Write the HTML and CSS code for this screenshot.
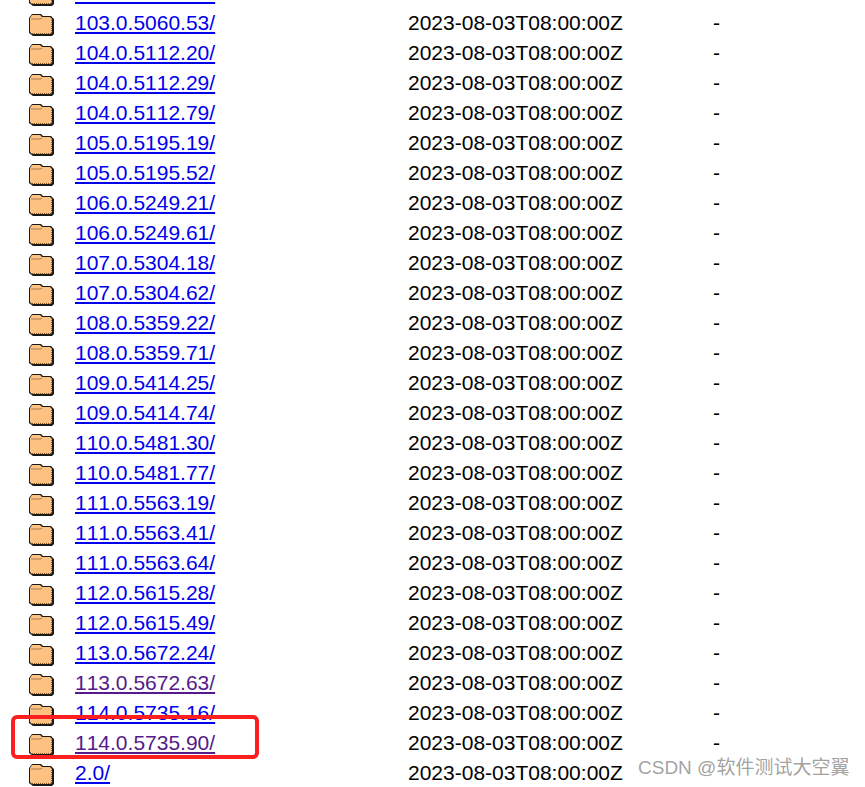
FILE: index.html
```html
<!DOCTYPE html>
<html lang="en">

<head>
	<meta charset="UTF-8">
	<title>Index of /</title>
	<link rel="stylesheet" href="styles.css">
</head>

<body>
	<svg class="defs" width="0" height="0">
		<symbol id="folder" viewBox="0 0 25 23">
			<path d="M0 5L3 1H12L14 3H22L25 6V21L23 23H4L0 20Z" fill="#1a1a1a" />
			<path d="M1 5L3 2H11L13 4H21L23 6V19L22 21H3L1 19Z" fill="#fdc282" />
			<path d="M2 6H12L13 5" stroke="#a87c4c" fill="none" />
			<path d="M3 20.500H22M22.500 7V20" stroke="#8a5a20" stroke-dasharray="1 1" fill="none" />
		</symbol>
	</svg>
	<div class="listing">
		<div class="row"><svg class="icon"><use href="#folder" /></svg><a href="#">103.0.5060.24/</a><span>2023-08-03T08:00:00Z</span><span>-</span></div>
		<div class="row"><svg class="icon"><use href="#folder" /></svg><a href="#">103.0.5060.53/</a><span>2023-08-03T08:00:00Z</span><span>-</span></div>
		<div class="row"><svg class="icon"><use href="#folder" /></svg><a href="#">104.0.5112.20/</a><span>2023-08-03T08:00:00Z</span><span>-</span></div>
		<div class="row"><svg class="icon"><use href="#folder" /></svg><a href="#">104.0.5112.29/</a><span>2023-08-03T08:00:00Z</span><span>-</span></div>
		<div class="row"><svg class="icon"><use href="#folder" /></svg><a href="#">104.0.5112.79/</a><span>2023-08-03T08:00:00Z</span><span>-</span></div>
		<div class="row"><svg class="icon"><use href="#folder" /></svg><a href="#">105.0.5195.19/</a><span>2023-08-03T08:00:00Z</span><span>-</span></div>
		<div class="row"><svg class="icon"><use href="#folder" /></svg><a href="#">105.0.5195.52/</a><span>2023-08-03T08:00:00Z</span><span>-</span></div>
		<div class="row"><svg class="icon"><use href="#folder" /></svg><a href="#">106.0.5249.21/</a><span>2023-08-03T08:00:00Z</span><span>-</span></div>
		<div class="row"><svg class="icon"><use href="#folder" /></svg><a href="#">106.0.5249.61/</a><span>2023-08-03T08:00:00Z</span><span>-</span></div>
		<div class="row"><svg class="icon"><use href="#folder" /></svg><a href="#">107.0.5304.18/</a><span>2023-08-03T08:00:00Z</span><span>-</span></div>
		<div class="row"><svg class="icon"><use href="#folder" /></svg><a href="#">107.0.5304.62/</a><span>2023-08-03T08:00:00Z</span><span>-</span></div>
		<div class="row"><svg class="icon"><use href="#folder" /></svg><a href="#">108.0.5359.22/</a><span>2023-08-03T08:00:00Z</span><span>-</span></div>
		<div class="row"><svg class="icon"><use href="#folder" /></svg><a href="#">108.0.5359.71/</a><span>2023-08-03T08:00:00Z</span><span>-</span></div>
		<div class="row"><svg class="icon"><use href="#folder" /></svg><a href="#">109.0.5414.25/</a><span>2023-08-03T08:00:00Z</span><span>-</span></div>
		<div class="row"><svg class="icon"><use href="#folder" /></svg><a href="#">109.0.5414.74/</a><span>2023-08-03T08:00:00Z</span><span>-</span></div>
		<div class="row"><svg class="icon"><use href="#folder" /></svg><a href="#">110.0.5481.30/</a><span>2023-08-03T08:00:00Z</span><span>-</span></div>
		<div class="row"><svg class="icon"><use href="#folder" /></svg><a href="#">110.0.5481.77/</a><span>2023-08-03T08:00:00Z</span><span>-</span></div>
		<div class="row"><svg class="icon"><use href="#folder" /></svg><a href="#">111.0.5563.19/</a><span>2023-08-03T08:00:00Z</span><span>-</span></div>
		<div class="row"><svg class="icon"><use href="#folder" /></svg><a href="#">111.0.5563.41/</a><span>2023-08-03T08:00:00Z</span><span>-</span></div>
		<div class="row"><svg class="icon"><use href="#folder" /></svg><a href="#">111.0.5563.64/</a><span>2023-08-03T08:00:00Z</span><span>-</span></div>
		<div class="row"><svg class="icon"><use href="#folder" /></svg><a href="#">112.0.5615.28/</a><span>2023-08-03T08:00:00Z</span><span>-</span></div>
		<div class="row"><svg class="icon"><use href="#folder" /></svg><a href="#">112.0.5615.49/</a><span>2023-08-03T08:00:00Z</span><span>-</span></div>
		<div class="row"><svg class="icon"><use href="#folder" /></svg><a href="#">113.0.5672.24/</a><span>2023-08-03T08:00:00Z</span><span>-</span></div>
		<div class="row"><svg class="icon"><use href="#folder" /></svg><a class="seen" href="#">113.0.5672.63/</a><span>2023-08-03T08:00:00Z</span><span>-</span></div>
		<div class="row"><svg class="icon"><use href="#folder" /></svg><a href="#">114.0.5735.16/</a><span>2023-08-03T08:00:00Z</span><span>-</span></div>
		<div class="row"><svg class="icon"><use href="#folder" /></svg><a class="seen" href="#">114.0.5735.90/</a><span>2023-08-03T08:00:00Z</span><span>-</span></div>
		<div class="row"><svg class="icon"><use href="#folder" /></svg><a href="#">2.0/</a><span>2023-08-03T08:00:00Z</span></div>
	</div>
	<div class="mark"></div>
	<div class="watermark">CSDN @软件测试大空翼</div>
</body>

</html>
```

FILE: styles.css
```css
* {
	margin: 0;
	padding: 0;
}

html,
body {
	height: 100%;
	overflow: hidden;
}

body {
	background: #fff;
	color: #000;
	font-family: "Liberation Sans", Arial, sans-serif;
	font-size: 21px;
	font-kerning: none;
	position: relative;
}

.defs {
	display: block;
	height: 0;
}

/* the page is scrolled: first row is cut off by the top edge */
.listing {
	margin-top: -22px;
}

.row {
	display: grid;
	grid-template-columns: 46px 333px 305px auto;
	align-items: center;
	height: 30px;
	padding-left: 29px;
	line-height: 30px;
	white-space: nowrap;
}

.row a {
	justify-self: start;
	color: #00e;
}

.row a.seen {
	color: #551a8b;
}

.icon {
	display: block;
	width: 25px;
	height: 23px;
	margin-top: 3px;
}

.mark {
	position: absolute;
	left: 11px;
	top: 715px;
	box-sizing: border-box;
	width: 248px;
	height: 44px;
	border: 4px solid #fc1f1f;
	border-radius: 6px;
}

.watermark {
	position: absolute;
	left: 638px;
	top: 756px;
	color: rgba(120, 120, 120, 0.7);
	font-family: "Liberation Sans", "Noto Sans CJK SC", sans-serif;
	font-size: 19px;
	line-height: 24px;
	white-space: nowrap;
}
```
